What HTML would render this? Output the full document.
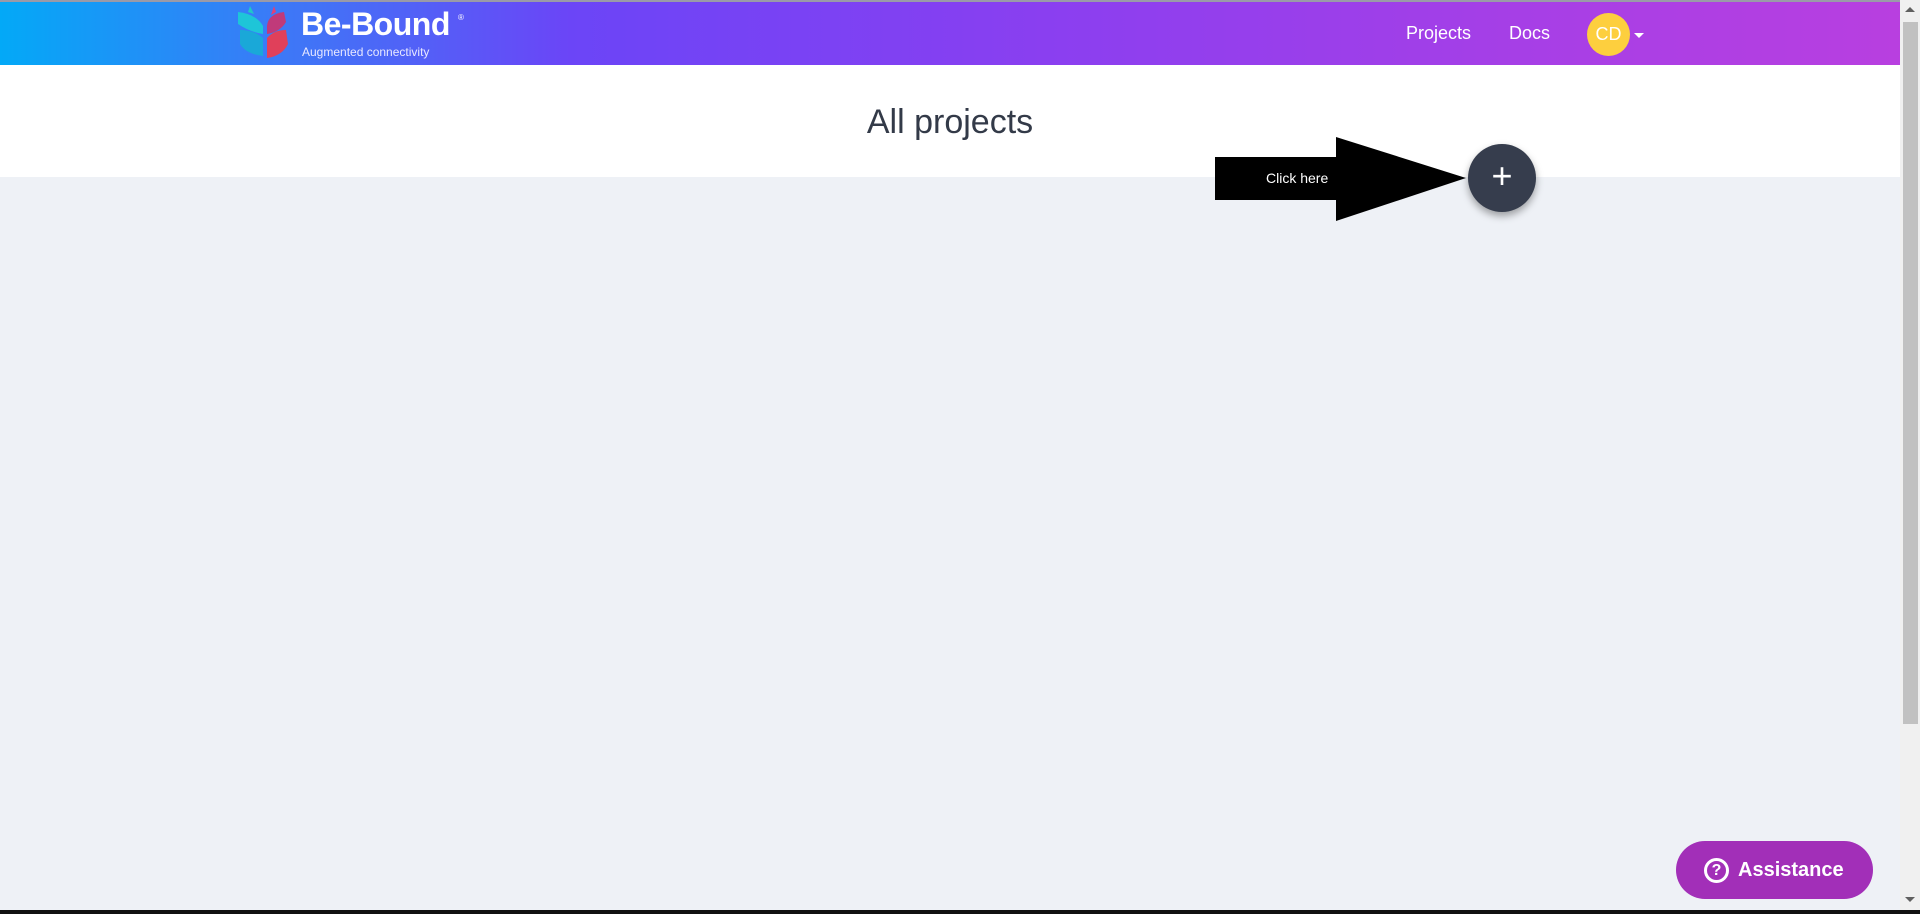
<!DOCTYPE html>
<html><head><meta charset="utf-8"><style>
*{margin:0;padding:0;box-sizing:border-box}
body{width:1920px;height:914px;overflow:hidden;background:#eef1f6;font-family:"Liberation Sans",sans-serif;position:relative}
.hdr{position:absolute;left:0;top:0;width:1900px;height:65px;border-top:2px solid #9a9aa8;background:linear-gradient(90deg,#03a9f7 0%,#3d78f7 15%,#6b45f7 30%,#8a3ff0 55%,#a63fe6 80%,#b83fe0 100%)}
.white{position:absolute;left:0;top:65px;width:1900px;height:112px;background:#fff}
.title{position:absolute;left:0;width:1900px;top:103px;text-align:center;font-size:34px;color:#333a48}
.nav{position:absolute;top:23px;color:#fff;font-size:18px}
.av{position:absolute;left:1587px;top:13px;width:43px;height:43px;border-radius:50%;background:#fdcf3e;color:#fff;font-size:18px;text-align:center;line-height:43px}
.sb{position:absolute;left:1900px;top:0;width:20px;height:914px;background:#f0f0f0}
.thumb{position:absolute;left:1903px;top:22px;width:15px;height:702px;background:#c1c1c1}
.fab{position:absolute;left:1468px;top:144px;width:68px;height:68px;border-radius:50%;background:#363d4d;box-shadow:0 4px 8px rgba(0,0,0,.35);color:#fff;font-size:36px;text-align:center;line-height:64px}
.asst{position:absolute;left:1676px;top:841px;width:197px;height:58px;border-radius:29px;background:#a22fb8;color:#fff;font-weight:bold;font-size:20px;line-height:58px;padding-left:62px}
.q{position:absolute;left:28px;top:17px;width:25px;height:25px;border:3px solid #fff;border-radius:50%;font-size:16px;line-height:19px;text-align:center;padding:0}
</style></head><body>
<div class="hdr">
<svg style="position:absolute;left:236px;top:2px" width="60" height="58" viewBox="0 0 60 58">
<path d="M14 2 l4 8 -6 -2z" fill="#1fc8c8"/><path d="M38 2 l-3 9 5 -3z" fill="#e0407a"/>
<path d="M2 8 Q20 10 27 22 L27 30 Q14 28 2 20z" fill="#1ec5d8"/>
<path d="M4 26 Q18 26 27 34 L27 52 Q10 50 4 40z" fill="#1aa8d8"/>
<path d="M48 8 Q32 10 31 22 L31 30 Q44 28 50 18z" fill="#c03a7a"/>
<path d="M50 26 Q38 26 31 34 L31 54 Q46 52 52 40z" fill="#e0405a"/>
</svg>
<div style="position:absolute;left:301px;top:4px;color:#fff;font-weight:bold;font-size:32px;letter-spacing:-0.5px">Be-Bound</div>
<div style="position:absolute;left:458px;top:11px;color:#fff;font-size:8px">®</div>
<div style="position:absolute;left:302px;top:43px;color:#e8e8ff;font-size:12px">Augmented connectivity</div>
</div>
<div class="nav" style="left:1406px">Projects</div>
<div class="nav" style="left:1509px">Docs</div>
<div class="av">CD</div>
<div style="position:absolute;left:1634px;top:33px;width:0;height:0;border-left:5px solid transparent;border-right:5px solid transparent;border-top:5px solid #fff"></div>
<div class="white"></div>
<div class="title">All projects</div>
<svg style="position:absolute;left:1214px;top:136px" width="256" height="88">
<rect x="1" y="21" width="122" height="43" fill="#000"/>
<polygon points="122,1 122,85 252,42" fill="#000"/>
</svg>
<div style="position:absolute;left:1266px;top:170px;color:#fff;font-size:14px">Click here</div>
<div class="fab">+</div>
<div class="asst"><div class="q">?</div>Assistance</div>
<div class="sb"></div><div class="thumb"></div>
<div style="position:absolute;left:1905px;top:7px;border-left:5px solid transparent;border-right:5px solid transparent;border-bottom:5px solid #606060"></div>
<div style="position:absolute;left:1905px;top:897px;border-left:5px solid transparent;border-right:5px solid transparent;border-top:5px solid #606060"></div>
<div style="position:absolute;left:0;top:910px;width:1920px;height:4px;background:#111"></div>
</body></html>
